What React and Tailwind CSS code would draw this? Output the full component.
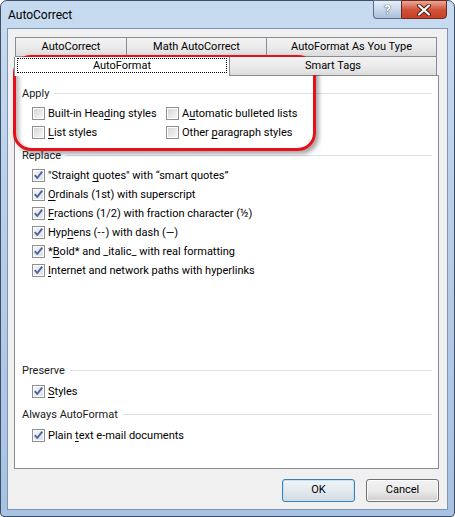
const Key = ({ children }) => <span className="underline underline-offset-[2px] decoration-[1px]">{children}</span>;

function CheckBox({ checked }) {
  return (
    <span className="shrink-0 w-[13px] h-[13px] border border-[#8e8f8f] bg-white p-px flex">
      <span
        className={`flex-1 flex items-center justify-center ${checked
          ? 'bg-gradient-to-br from-[#f2f3f5] to-[#dfe2e6]'
          : 'bg-gradient-to-br from-[#d8d8d8] to-[#f6f6f6]'}`}
      >
        {checked && (
          <svg width="11" height="11" viewBox="0 0 11 11" className="-m-px">
            <path d="M1.8 5.2 L4.2 8 L9.2 1.6" fill="none" stroke="#4a62a3" strokeWidth="1.9" strokeLinejoin="round" />
          </svg>
        )}
      </span>
    </span>
  );
}

function Option({ checked, children, className = '' }) {
  return (
    <div className={`flex items-center h-[19px] gap-[3px] ${className}`}>
      <CheckBox checked={checked} />
      <span className="leading-none whitespace-nowrap">{children}</span>
    </div>
  );
}

function Header({ children, className = '' }) {
  return (
    <div className={`flex items-center h-[19px] ${className}`}>
      <span className="leading-none whitespace-nowrap text-[#1a1a1a]">{children}</span>
      <span className="flex-1 h-px bg-[#d9e1e8] ml-[5px]" />
    </div>
  );
}

const tabBg = 'bg-gradient-to-b from-[#f3f3f3] via-[#ebebeb] to-[#dcdcdc] border border-[#898c95]';

export default function App() {
  return (
    <div className="w-[455px] h-[517px] relative font-['Roboto',sans-serif] text-[11px] text-black select-none">
      {/* window frame */}
      <div className="w-full h-full flex flex-col rounded-t-[7px] rounded-b-[4px] border border-[#3d4f66] bg-gradient-to-b from-[#c7dbf0] via-[#b6cde8] to-[#a7c2e2] px-[6px] pb-[6px]">
        {/* title bar */}
        <div className="h-[27px] flex items-start">
          <span className="pl-[1px] pt-[6px] text-[12px] leading-[16px] text-black">AutoCorrect</span>
          <div className="ml-auto flex -mt-px mr-[1px]">
            <div className="w-[28px] h-[19px] rounded-bl-[4px] border border-[#5b6f88] border-r-0 bg-gradient-to-b from-[#e7eef7] via-[#c9d8ea] to-[#a9bfd8] flex items-center justify-center">
              <span className="text-[13px] font-bold leading-none text-white [text-shadow:0_0_1px_#3a4a60,0_0_1px_#3a4a60]">?</span>
            </div>
            <div className="w-[46px] h-[19px] rounded-br-[4px] border border-[#6b2a1f] bg-gradient-to-b from-[#eaa898] via-[#d0533a] to-[#c8402a] flex items-center justify-center">
              <svg width="16" height="12" viewBox="0 0 16 12">
                <path d="M3 1.5 L13 10.5 M13 1.5 L3 10.5" stroke="#4a1a12" strokeWidth="4" strokeLinecap="round" />
                <path d="M3 1.5 L13 10.5 M13 1.5 L3 10.5" stroke="#ffffff" strokeWidth="2.2" strokeLinecap="round" />
              </svg>
            </div>
          </div>
        </div>

        {/* client area */}
        <div className="flex-1 border border-[#7d95b0] bg-[#f0f0f0] pt-[8px] pl-[6px] pr-[8px] flex flex-col">
          {/* tab rows */}
          <div className="flex flex-col">
            <div className="flex h-[20px] pl-[1px]">
              <div className={`${tabBg} w-[112px] flex items-center justify-center`}>AutoCorrect</div>
              <div className={`${tabBg} -ml-px w-[141px] flex items-center justify-center`}>Math AutoCorrect</div>
              <div className={`${tabBg} -ml-px w-[171px] flex items-center justify-center`}>AutoFormat As You Type</div>
            </div>
            <div className="flex items-start h-[18px] relative z-10">
              <div className="w-[216px] h-[19px] bg-white border border-[#898c95] border-t-0 border-b-0 relative flex items-center justify-center">
                <span className="absolute left-[2px] right-[2px] top-[1px] bottom-[3px] border border-dotted border-black" />
                AutoFormat
              </div>
              <div className={`${tabBg} border-t-0 border-b-0 -ml-px w-[208px] h-[18px] flex items-center justify-center`}>Smart Tags</div>
            </div>
          </div>

          {/* tab panel */}
          <div className="h-[394px] w-[425px] bg-white border border-[#898c95] pt-[8px] pl-[7px] pr-[6px] flex flex-col">
            <Header>Apply</Header>
            <div className="mt-[1px] pl-[10px] grid grid-cols-[134px_1fr]">
              <Option>Built-in Hea<Key>d</Key>ing styles</Option>
              <Option>A<Key>u</Key>tomatic bulleted lists</Option>
              <Option><Key>L</Key>ist styles</Option>
              <Option>Other <Key>p</Key>aragraph styles</Option>
            </div>

            <Header className="mt-[4px]">Replace</Header>
            <div className="mt-[1px] pl-[10px] flex flex-col">
              <Option checked className="h-[19.2px]">"Straight <Key>q</Key>uotes" with “smart quotes”</Option>
              <Option checked className="h-[19.2px]"><Key>O</Key>rdinals (1st) with superscript</Option>
              <Option checked className="h-[19.2px]"><Key>F</Key>ractions (1/2) with fraction character (½)</Option>
              <Option checked className="h-[19.2px]">Hyp<Key>h</Key>ens (<span className="tracking-[1px]">--</span>) with dash (—)</Option>
              <Option checked className="h-[19.2px]">*<Key>B</Key>old* and _italic_ with real formatting</Option>
              <Option checked className="h-[19.2px]"><Key>I</Key>nternet and network paths with hyperlinks</Option>
            </div>

            <Header className="mt-[81px]">Preserve</Header>
            <div className="mt-[2px] pl-[10px]">
              <Option checked><Key>S</Key>tyles</Option>
            </div>

            <Header className="mt-[4px]">Always AutoFormat</Header>
            <div className="mt-[2px] pl-[10px]">
              <Option checked>Plain <Key>t</Key>ext e-mail documents</Option>
            </div>
          </div>

          {/* dialog buttons */}
          <div className="mt-[10px] flex justify-end gap-[11px] w-[425px]">
            <button className="w-[73px] h-[23px] rounded-[3px] border border-[#3c7fb1] bg-gradient-to-b from-[#eef3f7] via-[#e4eaef] to-[#d2dae1] shadow-[inset_0_0_0_1px_#bfe3f6] flex items-center justify-center">OK</button>
            <button className="w-[73px] h-[23px] rounded-[3px] border border-[#707070] bg-gradient-to-b from-[#f2f2f2] via-[#ebebeb] to-[#cfcfcf] shadow-[inset_0_0_0_1px_#fcfcfc] flex items-center justify-center">Cancel</button>
          </div>
        </div>
      </div>

      {/* red annotation drawn over the Apply group */}
      <div className="absolute left-[13px] top-[55px] w-[303px] h-[96px] rounded-[18px] border-[3px] border-[#e5101b] shadow-[3px_3px_4px_rgba(0,0,0,0.35),inset_3px_3px_4px_rgba(0,0,0,0.28)] pointer-events-none" />
    </div>
  );
}
